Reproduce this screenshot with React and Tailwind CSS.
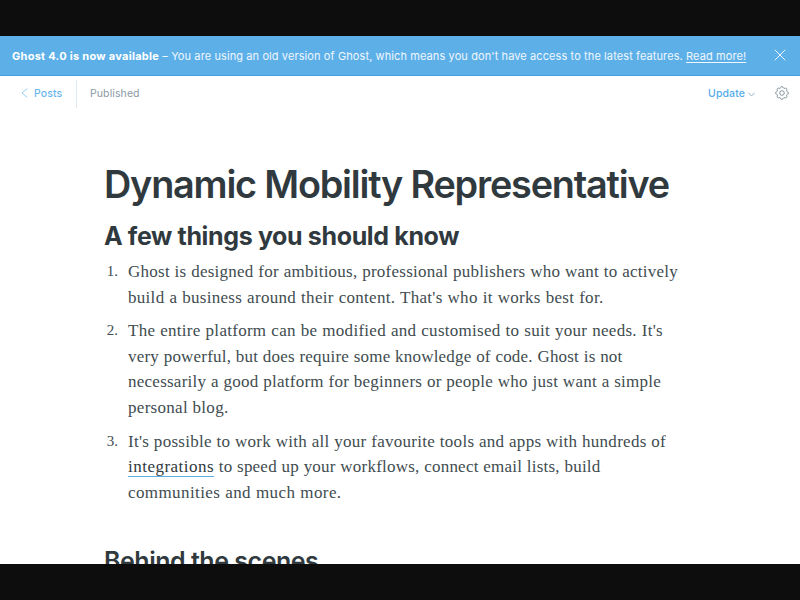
import React from "react";

const items = [
  {
    number: "1.",
    lines: [
      { text: "Ghost is designed for ambitious, professional publishers who want to actively", style: "w-[550px] tracking-[0.25px]" },
      { text: "build a business around their content. That's who it works best for.", style: "w-[475.5px] tracking-[0.3px]" },
    ],
  },
  {
    number: "2.",
    lines: [
      { text: "The entire platform can be modified and customised to suit your needs. It's", style: "w-[535px] tracking-[0.28px]" },
      { text: "very powerful, but does require some knowledge of code. Ghost is not", style: "w-[494.5px] tracking-[0.2px]" },
      { text: "necessarily a good platform for beginners or people who just want a simple", style: "w-[533px] tracking-[0.25px]" },
      { text: "personal blog.", style: "w-[100.5px] tracking-[0.3px]" },
    ],
  },
  {
    number: "3.",
    lines: [
      { text: "It's possible to work with all your favourite tools and apps with hundreds of", style: "w-[538px] tracking-[0.28px]" },
      { link: "integrations", text: " to speed up your workflows, connect email lists, build", style: "w-[472.5px] tracking-[0.22px]" },
      { text: "communities and much more.", style: "w-[213.5px] tracking-[0.4px]" },
    ],
  },
];

function Banner() {
  return (
    <div className="flex h-10 shrink-0 items-center justify-between border-b border-[#459de3] bg-[#5dafe8] pl-3 pr-[14px] text-[11px] text-white/90">
      <p className="whitespace-nowrap pt-[2px] tracking-[0.1px]">
        <strong className="font-bold tracking-[0.27px] text-white">Ghost 4.0 is now available</strong>
        {" – You are using an old version of Ghost, which means you don't have access to the latest features. "}
        <a className="underline underline-offset-2">Read more!</a>
      </p>
      <svg className="mb-px size-[12px]" viewBox="0 0 12 12" fill="none" stroke="white" strokeWidth="0.9" strokeLinecap="round">
        <path d="M1 1 11 11M11 1 1 11" />
      </svg>
    </div>
  );
}

function Toolbar() {
  return (
    <header className="flex h-[35px] shrink-0 items-center justify-between pl-[21px] pr-[11px] text-[10.5px] tracking-[0.1px]">
      <div className="flex items-center">
        <svg className="mb-px mr-[6px] h-[10px] w-[7px]" viewBox="0 0 7 10" fill="none" stroke="#7cc0ee" strokeWidth="0.8">
          <path d="M6.3 0.5 1 5l5.3 4.5" />
        </svg>
        <span className="w-[42px] font-medium text-[#6bb7ec]">Posts</span>
        <span className="h-[28px] border-l border-[#dfe9ef]" />
        <span className="ml-[13px] text-[#8a9aa5]">Published</span>
      </div>
      <div className="flex items-center">
        <span className="font-medium text-[#55abe8]">Update</span>
        <svg className="ml-[3px] mt-px h-[5px] w-[7px]" viewBox="0 0 7 5" fill="none" stroke="#8fa9ba" strokeWidth="0.9">
          <path d="M0.4 0.7 3.5 4 6.6 0.7" />
        </svg>
        <svg className="mb-[2px] ml-[20px] size-[14px]" viewBox="0 0 14 14" fill="none" stroke="#74858f" strokeWidth="0.85" strokeLinejoin="round">
          <circle cx="7" cy="7" r="2.3" />
          <path d="M5.6 1.7Q5.8 0.6 7 0.6Q8.2 0.6 8.4 1.7Q8.8 2.9 9.8 2.3Q10.8 1.7 11.5 2.5Q12.3 3.2 11.7 4.2Q11.1 5.2 12.3 5.6Q13.4 5.8 13.4 7Q13.4 8.2 12.3 8.4Q11.1 8.8 11.7 9.8Q12.3 10.8 11.5 11.5Q10.8 12.3 9.8 11.7Q8.8 11.1 8.4 12.3Q8.2 13.4 7 13.4Q5.8 13.4 5.6 12.3Q5.2 11.1 4.2 11.7Q3.2 12.3 2.5 11.5Q1.7 10.8 2.3 9.8Q2.9 8.8 1.7 8.4Q0.6 8.2 0.6 7Q0.6 5.8 1.7 5.6Q2.9 5.2 2.3 4.2Q1.7 3.2 2.5 2.5Q3.2 1.7 4.2 2.3Q5.2 2.9 5.6 1.7Z" />
        </svg>
      </div>
    </header>
  );
}

export default function App() {
  return (
    <div className="h-[600px] w-[800px] overflow-hidden bg-[#0d0d0d] py-9 font-['Inter',sans-serif]">
      <div className="flex h-[528px] flex-col overflow-hidden bg-white">
        <Banner />
        <Toolbar />
        <main className="pl-[104px] pt-[48px] text-[#303a3e]">
          <h1 className="h-[50px] whitespace-nowrap text-[37.8px] font-semibold leading-[50px] tracking-[-1.2px]">
            Dynamic Mobility Representative
          </h1>
          <h2 className="mt-[11px] h-[32px] whitespace-nowrap text-[25px] font-bold leading-[32px] tracking-[-0.36px]">
            A few things you should know
          </h2>
          <ol className="mt-[7px] flex flex-col gap-[8px] font-['Georgia','Liberation_Serif',serif] text-[17px] leading-[25.6px] text-[#414c50]">
            {items.map((item) => (
              <li key={item.number} className="flex">
                <span className="w-[14px] shrink-0 text-right text-[15px]">{item.number}</span>
                <div className="ml-[10px]">
                  {item.lines.map((line) => (
                    <p key={line.text} className={`whitespace-nowrap [text-align-last:justify] ${line.style}`}>
                      {line.link && (
                        <a className="border-b border-[#5dafe8] tracking-[0.48px] text-[#303a3e]">{line.link}</a>
                      )}
                      {line.text}
                    </p>
                  ))}
                </div>
              </li>
            ))}
          </ol>
          <h2 className="mt-[40px] whitespace-nowrap text-[25px] font-semibold leading-[32px] tracking-[-0.48px]">
            Behind the scenes
          </h2>
        </main>
      </div>
    </div>
  );
}
